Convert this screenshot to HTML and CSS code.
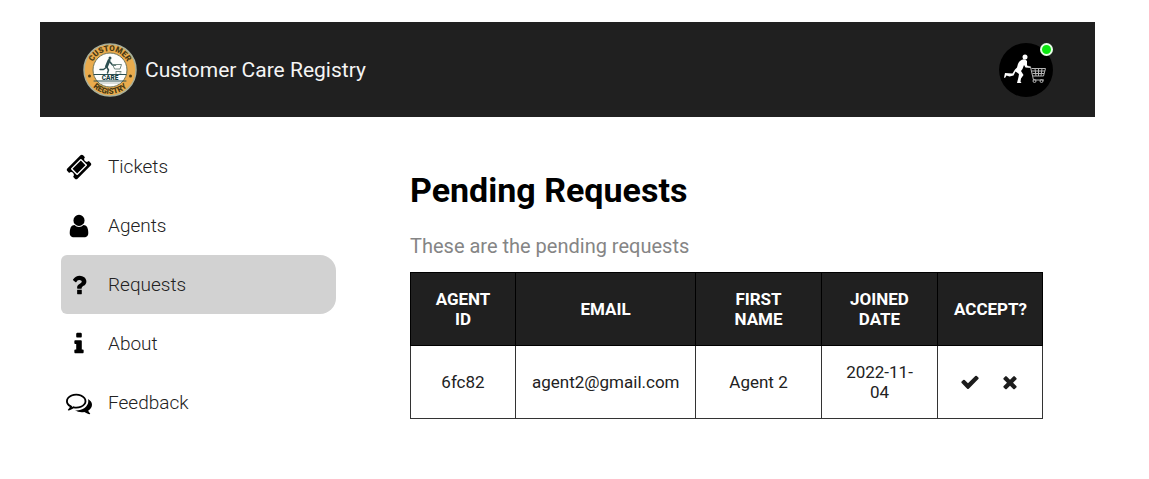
FILE: index.html
```html
<!DOCTYPE html>
<html lang="en">
<head>
<meta charset="utf-8">
<meta name="viewport" content="width=device-width, initial-scale=1">
<title>Customer Care Registry</title>
<link rel="stylesheet" href="styles.css">
</head>
<body>
<div class="page">
  <header class="topbar">
    <a class="brand" href="#">
      <svg class="brand-logo" viewBox="0 0 108 108" aria-hidden="true">
        <defs>
          <path id="arc-top" d="M16 54a38 38 0 0 1 76 0"/>
          <path id="arc-bottom" d="M6 54a48 48 0 0 0 96 0"/>
        </defs>
        <circle cx="54" cy="54" r="52" fill="#e9ab4d" stroke="#a9b09a" stroke-width="3"/>
        <circle cx="54" cy="54" r="34" fill="#fdfdfb" stroke="#6d7358" stroke-width="2"/>
        <text class="seal-text" text-anchor="middle"><textPath href="#arc-top" startOffset="50%">CUSTOMER</textPath></text>
        <text class="seal-text" text-anchor="middle"><textPath href="#arc-bottom" startOffset="50%">REGISTRY</textPath></text>
        <circle cx="13" cy="66" r="3" fill="#4a3a14"/>
        <circle cx="95" cy="66" r="3" fill="#4a3a14"/>
        <g fill="none" stroke="#2c4f50" stroke-linecap="round" stroke-linejoin="round">
          <circle cx="54" cy="30" r="3" fill="#2c4f50" stroke="none"/>
          <path d="M52 35l-5 12" stroke-width="6"/>
          <path d="M54 38l5 6h6M45 50l-4 3h-7M48 49l3 5-2 6" stroke-width="3"/>
          <path d="M60 43h17l-3 9H64zM66 57h10M65 60h2m7 0h2" stroke="#71877f" stroke-width="2"/>
          <path d="M22 63h64M22 76h64" stroke-width="2"/>
          <path d="M35 80h38" stroke="#b9c2be" stroke-width="2"/>
        </g>
        <text class="seal-name" x="54" y="74" text-anchor="middle">CARE</text>
      </svg>
      <span>Customer Care Registry</span>
    </a>
    <button class="profile" type="button" aria-label="Profile, online">
      <svg class="profile-picture" viewBox="0 0 108 108" aria-hidden="true">
        <circle cx="54" cy="54" r="54" fill="#000"/>
        <circle cx="52" cy="28" r="5" fill="#fff"/>
        <path d="M42 36q5-5 11-3l3 3v9l7 2 1 3-11-1-3-5-3 8-3 4 5 8-5 7-1 6 2 3h-9l3-12 1-6-7-5-4 8-8 2-6-2-3 5-2-1 2-9 15 1 5-8 4-4q1-7 4-11z" fill="#fff"/>
        <g fill="none" stroke="#b5b5b5" stroke-width="2" stroke-linejoin="round">
          <path d="M59 47l4 1 6 26h21M65 51h28l-4 15H68M66 56h26M67 61h23M72 51l2 15M79 51v15M86 51l-2 15"/>
          <circle cx="71" cy="76" r="3"/>
          <circle cx="85" cy="76" r="3"/>
        </g>
      </svg>
      <span class="status-dot"></span>
    </button>
  </header>

  <div class="content">
    <nav class="sidebar" aria-label="Main">
      <a class="nav-item" href="#">
        <svg class="nav-icon" viewBox="0 0 1792 1792" aria-hidden="true"><path d="M1024 452l316 316-572 572-316-316zm-211 979l618-618q19-19 19-45t-19-45l-362-362q-18-18-45-18t-45 18l-618 618q-19 19-19 45t19 45l362 362q18 18 45 18t45-18zm889-637l-907 908q-37 37-90.5 37t-90.5-37l-126-126q56-56 56-136t-56-136-136-56-136 56l-125-126q-37-37-37-90.5t37-90.5l907-906q37-37 90.5-37t90.5 37l125 125q-56 56-56 136t56 136 136 56 136-56l126 125q37 37 37 90.5t-37 90.5z"/></svg>
        Tickets
      </a>
      <a class="nav-item" href="#">
        <svg class="nav-icon" viewBox="0 0 1792 1792" aria-hidden="true"><path d="M1536 1399q0 109-62.5 187t-150.5 78h-854q-88 0-150.5-78t-62.5-187q0-85 8.5-160.5t31.5-152 58.5-131 94-89 134.5-34.5q131 128 313 128t313-128q76 0 134.5 34.5t94 89 58.5 131 31.5 152 8.5 160.5zm-256-887q0 159-112.5 271.5t-271.5 112.5-271.5-112.5-112.5-271.5 112.5-271.5 271.5-112.5 271.5 112.5 112.5 271.5z"/></svg>
        Agents
      </a>
      <a class="nav-item nav-item-active" href="#" aria-current="page">
        <svg class="nav-icon" viewBox="0 0 1792 1792" aria-hidden="true"><path d="M1088 1256v240q0 16-12 28t-28 12h-240q-16 0-28-12t-12-28v-240q0-16 12-28t28-12h240q16 0 28 12t12 28zm316-600q0 54-15.5 101t-35 76.5-55 59.5-57.5 43.5-61 35.5q-41 23-68.5 65t-27.5 67q0 17-12 32.5t-28 15.5h-240q-15 0-25.5-18.5t-10.5-37.5v-45q0-83 65-156.5t143-108.5q59-27 84-56t25-76q0-42-46.5-74t-107.5-32q-65 0-108 29-35 25-107 115-13 16-31 16-12 0-25-8l-164-125q-13-10-15.5-25t5.5-28q160-266 464-266 80 0 161 31t146 83 106 127.5 41 158.5z"/></svg>
        Requests
      </a>
      <a class="nav-item" href="#">
        <svg class="nav-icon" viewBox="0 0 1792 1792" aria-hidden="true"><path d="M1216 1344v128q0 26-19 45t-45 19h-512q-26 0-45-19t-19-45v-128q0-26 19-45t45-19h64v-384h-64q-26 0-45-19t-19-45v-128q0-26 19-45t45-19h384q26 0 45 19t19 45v576h64q26 0 45 19t19 45zm-128-1152v192q0 26-19 45t-45 19h-256q-26 0-45-19t-19-45v-192q0-26 19-45t45-19h256q26 0 45 19t19 45z"/></svg>
        About
      </a>
      <a class="nav-item" href="#">
        <svg class="nav-icon" viewBox="0 0 1792 1792" aria-hidden="true"><path d="M704 384q-153 0-286 52t-211.5 141-78.5 191q0 82 53 158t149 132l97 56-35 84q34-20 62-39l44-31 53 10q78 14 153 14 153 0 286-52t211.5-141 78.5-191-78.5-191-211.5-141-286-52zm0-128q191 0 353.5 68.5t256.5 186.5 94 257-94 257-256.5 186.5-353.5 68.5q-86 0-176-16-124 88-278 128-36 9-86 16h-3q-11 0-20.5-8t-11.5-21q-1-3-1-6.5t.5-6.5 2-6l2.5-5 3.5-5.5 4-5 4.5-5 4-4.5q5-6 23-25t26-29.5 22.5-29 25-38.5 20.5-44q-124-72-195-177t-71-224q0-139 94-257t256.5-186.5 353.5-68.5zm822 1169q10 24 20.5 44t25 38.5 22.5 29 26 29.5 23 25q1 1 4 4.5t4.5 5 4 5 3.5 5.5l2.5 5 2 6 .5 6.5-1 6.5q-3 14-13 22t-22 7q-50-7-86-16-154-40-278-128-90 16-176 16-271 0-472-132 58 4 88 4 161 0 309-45t264-129q125-92 192-212t67-254q0-77-23-152 129 71 204 178t75 230q0 120-71 224.5t-195 176.5z"/></svg>
        Feedback
      </a>
    </nav>

    <main class="main">
      <h1 class="title">Pending Requests</h1>
      <p class="subtitle">These are the pending requests</p>
      <table class="requests">
        <colgroup>
          <col class="col-id"><col class="col-email"><col class="col-name"><col class="col-date"><col class="col-accept">
        </colgroup>
        <thead>
          <tr>
            <th scope="col">AGENT ID</th>
            <th scope="col">EMAIL</th>
            <th scope="col">FIRST NAME</th>
            <th scope="col">JOINED DATE</th>
            <th scope="col">ACCEPT?</th>
          </tr>
        </thead>
        <tbody>
          <tr>
            <td>6fc82</td>
            <td>agent2@gmail.com</td>
            <td>Agent 2</td>
            <td>2022-11-04</td>
            <td>
              <div class="actions">
                <button class="action" type="button" aria-label="Accept">
                  <svg class="action-icon" viewBox="0 0 1792 1792" aria-hidden="true"><path d="M1671 566q0 40-28 68l-724 724-136 136q-28 28-68 28t-68-28l-136-136-362-362q-28-28-28-68t28-68l136-136q28-28 68-28t68 28l294 295 656-657q28-28 68-28t68 28l136 136q28 28 28 68z"/></svg>
                </button>
                <button class="action" type="button" aria-label="Reject">
                  <svg class="action-icon" viewBox="0 0 1792 1792" aria-hidden="true"><path d="M1490 1322q0 40-28 68l-136 136q-28 28-68 28t-68-28l-294-294-294 294q-28 28-68 28t-68-28l-136-136q-28-28-28-68t28-68l294-294-294-294q-28-28-28-68t28-68l136-136q28-28 68-28t68 28l294 294 294-294q28-28 68-28t68 28l136 136q28 28 28 68t-28 68l-294 294 294 294q28 28 28 68z"/></svg>
                </button>
              </div>
            </td>
          </tr>
        </tbody>
      </table>
    </main>
  </div>
</div>
</body>
</html>
```
FILE: styles.css
```css
* {
  box-sizing: border-box;
}

body {
  margin: 0;
  background: #fff;
  color: #000;
  font-family: Roboto, "Liberation Sans", sans-serif;
}

.page {
  padding: 22px 54px 22px 40px;
}

.topbar {
  display: flex;
  align-items: center;
  justify-content: space-between;
  padding: 21px 42px 20px 43px;
  background: #202020;
}

.brand {
  display: flex;
  align-items: center;
  gap: 8px;
  color: #f4f4f4;
  font-size: 21px;
  line-height: 24px;
  text-decoration: none;
}

.brand-logo {
  width: 54px;
  height: 54px;
}

.seal-text {
  fill: #4a3a14;
  font-size: 16px;
  font-weight: 900;
}

.seal-name {
  fill: #173f43;
  font-size: 13px;
  font-weight: 900;
}

.profile {
  position: relative;
  padding: 0;
  border: 0;
  border-radius: 50%;
  background: none;
  cursor: pointer;
}

.profile-picture {
  display: block;
  width: 54px;
  height: 54px;
}

.status-dot {
  position: absolute;
  top: 0;
  right: 0;
  width: 13px;
  height: 13px;
  border: 2px solid #e4ffe4;
  border-radius: 50%;
  background: #0be80f;
}

.content {
  display: flex;
  gap: 74px;
  padding: 20px 54px 0 21px;
}

.sidebar {
  display: flex;
  flex: 0 0 275px;
  flex-direction: column;
}

.nav-item {
  display: flex;
  align-items: center;
  gap: 16px;
  padding: 16px 5px;
  border-radius: 6px 16px 16px 6px;
  color: #222;
  font-size: 19px;
  font-weight: 300;
  line-height: 27px;
  text-decoration: none;
}

.nav-item-active {
  background: #d2d2d2;
}

.nav-icon {
  width: 26px;
  height: 26px;
  fill: #000;
}

.main {
  flex: 1;
  min-width: 0;
  padding-top: 33px;
}

.title {
  margin: 0;
  font-size: 34px;
  font-weight: 700;
  line-height: 40px;
}

.subtitle {
  margin: 24px 0 14px;
  color: #858585;
  font-size: 20px;
  line-height: 24px;
}

.requests {
  width: 100%;
  border-collapse: collapse;
  table-layout: fixed;
  color: #222;
  font-size: 17px;
  line-height: 20px;
  text-align: center;
}

.requests th,
.requests td {
  padding: 16px;
  border: 1px solid #333;
}

.requests th {
  border-color: #000;
  background: #202020;
  color: #fff;
  font-weight: 700;
}

.col-id,
.col-accept {
  width: 105px;
}

.col-email {
  width: 180px;
}

.col-name {
  width: 126px;
}

.col-date {
  width: 116px;
}

.actions {
  display: flex;
  justify-content: center;
  gap: 20px;
}

.action {
  padding: 0;
  border: 0;
  background: none;
  cursor: pointer;
}

.action-icon {
  display: block;
  width: 20px;
  height: 20px;
  fill: #1c1c1c;
}
```
